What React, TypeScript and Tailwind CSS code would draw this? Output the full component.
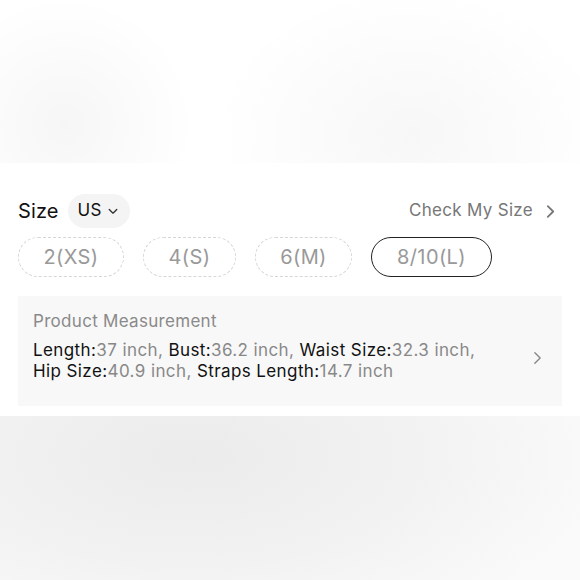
import React from 'react';

const Chevron: React.FC<{ className?: string; width?: number }> = ({ className, width = 2 }) => (
  <svg viewBox="0 0 10 16" className={className} fill="none" stroke="currentColor" strokeWidth={width} strokeLinecap="round" strokeLinejoin="round">
    <polyline points="2,2 8,8 2,14" />
  </svg>
);

const sizes = [
  { label: '2(XS)', w: 'w-[106px]' },
  { label: '4(S)', w: 'w-[93px]' },
  { label: '6(M)', w: 'w-[97px]' },
];

const measurements: [string, string][] = [
  ['Length:', '37 inch, '],
  ['Bust:', '36.2 inch, '],
  ['Waist Size:', '32.3 inch, '],
];

const App: React.FC = () => {
  return (
    <div className="w-[580px] h-[580px] flex flex-col bg-white font-['Inter','Noto_Sans',sans-serif] overflow-hidden">
      {/* Blurred backdrop above */}
      <div className="h-[163px] shrink-0 bg-[radial-gradient(circle_at_65px_125px,rgba(0,0,0,0.035),transparent_130px),radial-gradient(ellipse_200px_150px_at_410px_135px,rgba(0,0,0,0.032),transparent)]" />

      {/* Size panel */}
      <div className="h-[253px] shrink-0 bg-white px-[18px] pt-[31px]">
        <div className="flex items-center justify-between h-[34px]">
          <div className="flex items-center gap-[9px]">
            <span className="text-[20px] text-[#111] tracking-[0.1px]">Size</span>
            <button className="h-[34px] pl-[10px] pr-[12px] rounded-full bg-[#f4f4f4] flex items-center gap-[6px]">
              <span className="text-[17px] text-[#111] tracking-[0.3px]">US</span>
              <svg viewBox="0 0 12 8" className="w-[10px] h-[7px] text-[#333]" fill="none" stroke="currentColor" strokeWidth={1.6} strokeLinecap="round" strokeLinejoin="round">
                <polyline points="1.5,1.5 6,6 10.5,1.5" />
              </svg>
            </button>
          </div>
          <div className="flex items-center gap-[13px] pr-[7px]">
            <span className="text-[17px] text-[#777] tracking-[0.3px]">Check My Size</span>
            <Chevron className="w-[9px] h-[15px] text-[#777]" />
          </div>
        </div>

        <div className="flex items-center gap-[19px] mt-[9px]">
          {sizes.map((s) => (
            <div key={s.label} className={`${s.w} h-[40px] rounded-full border border-dashed border-[#d6d6d6] flex items-center justify-center text-[20px] tracking-[0.4px] text-[#999]`}>
              {s.label}
            </div>
          ))}
          <div className="w-[121px] h-[40px] rounded-full border-[1.5px] border-[#222] flex items-center justify-center text-[20px] tracking-[0.4px] text-[#999]">
            8/10(L)
          </div>
        </div>

        <div className="mt-[19px] h-[110px] bg-[#f8f8f8] pl-[15px] pr-[20px] pt-[14px] flex items-center justify-between">
          <div className="self-start">
            <div className="text-[17px] text-[#8a8a8a] leading-[22px] tracking-[0.3px]">Product Measurement</div>
            <div className="mt-[8px] text-[17px] leading-[21px] tracking-[0.4px] text-[#111]">
              {measurements.map(([k, v]) => (
                <React.Fragment key={k}>
                  {k}<span className="text-[#888]">{v}</span>
                </React.Fragment>
              ))}
              <br />
              Hip Size:<span className="text-[#888]">40.9 inch, </span>Straps Length:<span className="text-[#888]">14.7 inch</span>
            </div>
          </div>
          <Chevron className="w-[9px] h-[14px] text-[#888] mt-[-1px]" width={1.6} />
        </div>
      </div>

      {/* Blurred backdrop below */}
      <div className="flex-1 bg-[radial-gradient(ellipse_420px_200px_at_190px_40px,#ebebeb,#f2f2f2_55%,#fafafa)]" />
    </div>
  );
};

export default App;
